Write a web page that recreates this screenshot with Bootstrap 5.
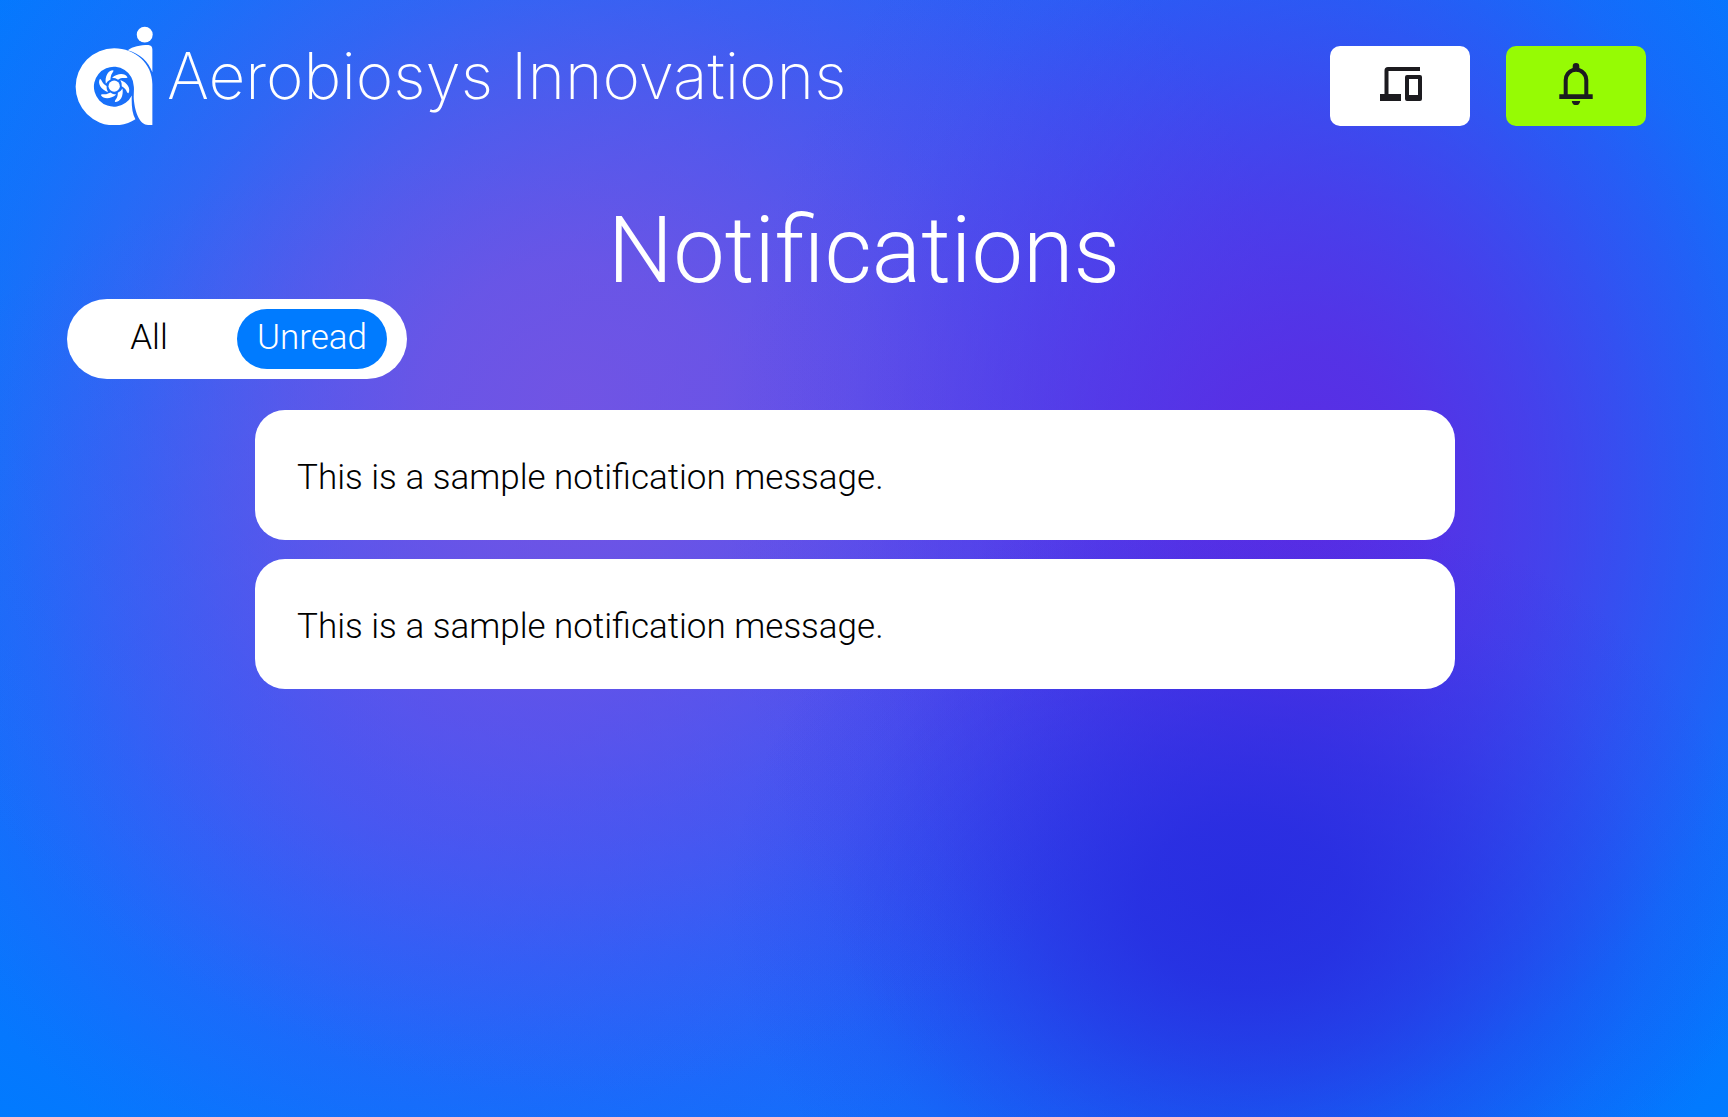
<!DOCTYPE html>
<html lang="en">
<head>
<meta charset="utf-8">
<meta name="viewport" content="width=device-width, initial-scale=1">
<title>Notifications – Aerobiosys Innovations</title>
<link href="https://cdn.jsdelivr.net/npm/bootstrap@5.3.0/dist/css/bootstrap.min.css" rel="stylesheet">
<style>
body {
  font-family: Roboto, "Liberation Sans", sans-serif;
  font-weight: 300;
  background-color: #007bff;
  background-image:
    radial-gradient(ellipse 30% 37% at 72% 81%, rgba(36,40,222,.84) 0%, rgba(36,40,222,.76) 20%, rgba(36,40,222,.55) 40%, rgba(36,40,222,.3) 60%, rgba(36,40,222,.1) 80%, rgba(36,40,222,0) 100%),
    radial-gradient(ellipse 34% 68% at 76% 45%, rgba(94,40,226,.92) 0%, rgba(94,40,226,.8) 20%, rgba(94,40,226,.58) 40%, rgba(94,40,226,.32) 60%, rgba(94,40,226,.1) 80%, rgba(94,40,226,0) 100%),
    radial-gradient(ellipse 42% 62% at 33% 36%, rgba(120,84,226,.88) 0%, rgba(120,84,226,.78) 20%, rgba(120,84,226,.54) 40%, rgba(120,84,226,.28) 60%, rgba(120,84,226,.1) 80%, rgba(120,84,226,0) 100%),
    radial-gradient(ellipse 38% 50% at 25% 64%, rgba(76,78,242,.72) 0%, rgba(76,78,242,.64) 20%, rgba(76,78,242,.46) 40%, rgba(76,78,242,.26) 60%, rgba(76,78,242,.1) 80%, rgba(76,78,242,0) 100%),
    radial-gradient(ellipse 66% 84% at 53% 42%, rgba(76,72,240,.86) 0%, rgba(76,72,240,.76) 20%, rgba(76,72,240,.6) 40%, rgba(76,72,240,.36) 60%, rgba(76,72,240,.14) 80%, rgba(76,72,240,0) 100%);
}
.topbar { padding: 26px 82px 0 75px; }
.brand { gap: 14px; }
.brand-logo { width: 78px; height: 99px; }
.brand-name { font-family: Inter, sans-serif; font-weight: 200; font-size: 64px; line-height: 100px; }
.actions { gap: 36px; }
.btn-tile { width: 140px; height: 80px; border-radius: 10px; padding: 0 0 4px; margin-top: 20px; color: #1c1b1f; }
.btn-lime, .btn-lime:hover { background: #96fb04; }
.page-title { font-size: 92px; line-height: 118px; font-weight: 300; margin-top: 66px; }
.filter { width: 340px; height: 80px; padding: 10px 20px 10px 0; margin: -11px 0 0 67px; gap: 6px; }
.filter-btn { font-size: 35px; line-height: 36px; font-weight: 300; height: 60px; padding: 0 0 2px; color: #000; }
.filter-btn.active-pill { width: 150px; background: #007bff; color: #fff; }
.feed { margin: 31px 273px 48px 255px; gap: 19px; }
.notice { height: 130px; border-radius: 30px; padding: 6px 42px 0; font-size: 35px; color: #000; }
</style>
</head>
<body class="min-vh-100">
<header class="topbar d-flex justify-content-between align-items-start">
  <a class="brand d-flex text-white text-decoration-none" href="#">
    <svg class="brand-logo" viewBox="45 47 233 298" fill="#fff" aria-hidden="true">
      <circle cx="254" cy="73" r="24"/>
      <path d="M203 120C218 108 240 104 265 104Q277 105 277 118V186C265 155 240 130 203 120Z"/>
      <path d="M162 114C225 114 277 160 277 222V345H264C240 345 226 310 222 276C219 255 223 240 221 228A60 60 0 1 0 215 256C214 285 216 310 226 328C208 340 186 346 162 346A116 116 0 0 1 162 114Z"/>
      <g transform="translate(162 228)">
        <circle r="17"/>
        <path id="blade" d="M-25 -7C-29 -30 -18 -48 -3 -48C0 -44 -7 -40 -9 -33C-11 -27 -11 -23 -11 -20Q-20 -16 -25 -7Z"/>
        <use href="#blade" transform="rotate(60)"/>
        <use href="#blade" transform="rotate(120)"/>
        <use href="#blade" transform="rotate(180)"/>
        <use href="#blade" transform="rotate(240)"/>
        <use href="#blade" transform="rotate(300)"/>
      </g>
    </svg>
    <span class="brand-name">Aerobiosys Innovations</span>
  </a>
  <div class="actions d-flex">
    <button class="btn bg-white btn-tile border-0" type="button" aria-label="Devices">
      <svg width="44" height="34" viewBox="-2 0 44 34" fill="currentColor" aria-hidden="true">
        <path d="M8 0H40V4H8.500V27H21V34H0V27H4.500V3.500A3.500 3.500 0 0 1 8 0Z"/>
        <path fill-rule="evenodd" d="M27 8H40A2 2 0 0 1 42 10V32A2 2 0 0 1 40 34H27A2 2 0 0 1 25 32V10A2 2 0 0 1 27 8ZM29 12V28H38V12Z"/>
      </svg>
    </button>
    <button class="btn btn-lime btn-tile border-0" type="button" aria-label="Notifications">
      <svg width="34" height="42" viewBox="0 0 34 42" fill="currentColor" aria-hidden="true">
        <path fill-rule="evenodd" d="M13.700 3.300A3.300 3.300 0 0 1 20.300 3.300V5A12.300 12.300 0 0 1 29.300 17V31.300H33.700V36H.3V31.300H4.700V17A12.300 12.300 0 0 1 13.700 5ZM8.700 17V31.300H25.300V17A8.300 8.300 0 0 0 8.700 17Z"/>
        <path d="M12.800 38H21.200A4.200 4.200 0 0 1 12.800 38Z"/>
      </svg>
    </button>
  </div>
</header>
<main>
  <h1 class="page-title text-white text-center mb-0">Notifications</h1>
  <div class="filter bg-white rounded-pill d-flex">
    <button class="btn border-0 filter-btn flex-fill" type="button">All</button>
    <button class="btn border-0 filter-btn rounded-pill active-pill" type="button" aria-pressed="true">Unread</button>
  </div>
  <div class="feed d-flex flex-column">
    <div class="notice bg-white d-flex align-items-center">This is a sample notification message.</div>
    <div class="notice bg-white d-flex align-items-center">This is a sample notification message.</div>
  </div>
</main>
<script src="https://cdn.jsdelivr.net/npm/bootstrap@5.3.0/dist/js/bootstrap.bundle.min.js"></script>
</body>
</html>
